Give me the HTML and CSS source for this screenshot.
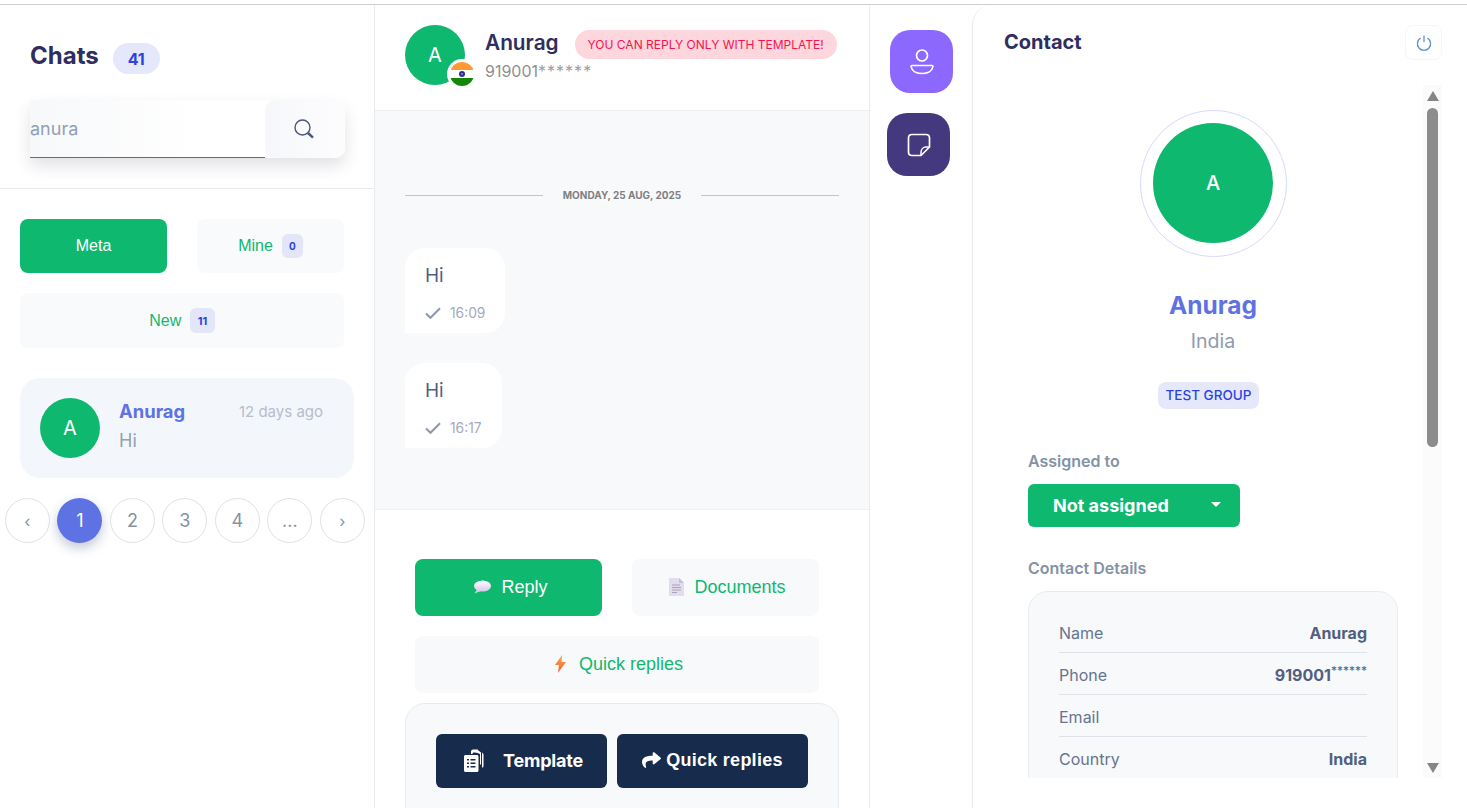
FILE: index.html
```html
<!DOCTYPE html>
<html lang="en">

<head>
    <meta charset="UTF-8">
    <meta name="viewport" content="width=device-width, initial-scale=1.0">
    <title>Chats</title>
    <link rel="stylesheet" href="styles.css">
</head>

<body>
    <div class="app">

        <!-- Chat list -->
        <aside class="sidebar">
            <div class="side-head">
                <div class="title-row">
                    <h2>Chats</h2>
                    <span class="count-pill">41</span>
                </div>
                <div class="search">
                    <input type="text" value="anura">
                    <button type="button" class="search-btn">
                        <svg width="22" height="22" viewBox="0 0 22 22" fill="none" stroke="#4a5578" stroke-width="1.4">
                            <circle cx="9.5" cy="9.5" r="7.5"/>
                            <path d="M15 15l5 4.6" stroke-width="2.4"/>
                        </svg>
                    </button>
                </div>
            </div>

            <div class="filters">
                <button type="button" class="tab active">Meta</button>
                <button type="button" class="tab">Mine <span class="tab-count">0</span></button>
                <button type="button" class="tab wide">New <span class="tab-count">11</span></button>
            </div>

            <div class="chat-card">
                <div class="avatar">A</div>
                <div class="chat-info">
                    <div class="chat-top">
                        <span class="chat-name">Anurag</span>
                        <span class="chat-time">12 days ago</span>
                    </div>
                    <div class="chat-text">Hi</div>
                </div>
            </div>

            <div class="pager">
                <a class="page small">‹</a>
                <a class="page current">1</a>
                <a class="page">2</a>
                <a class="page">3</a>
                <a class="page">4</a>
                <a class="page">...</a>
                <a class="page small">›</a>
            </div>
        </aside>

        <!-- Conversation -->
        <main class="convo">
            <div class="convo-head">
                <div class="avatar head-avatar">
                    A
                    <span class="flag">
                        <svg width="24" height="24" viewBox="0 0 24 24">
                            <clipPath id="flagClip"><circle cx="12" cy="12" r="12"/></clipPath>
                            <g clip-path="url(#flagClip)">
                                <rect width="24" height="8" fill="#ff9933"/>
                                <rect y="8" width="24" height="8" fill="#fff"/>
                                <rect y="16" width="24" height="8" fill="#138808"/>
                                <circle cx="12" cy="12" r="3" fill="#2a2f8f"/>
                                <circle cx="12" cy="12" r="1" fill="#8d90c8"/>
                            </g>
                        </svg>
                    </span>
                </div>
                <div class="head-text">
                    <div class="head-line">
                        <span class="head-name">Anurag</span>
                        <span class="alert-pill">YOU CAN REPLY ONLY WITH TEMPLATE!</span>
                    </div>
                    <div class="head-phone">919001<span class="stars">******</span></div>
                </div>
            </div>

            <div class="messages">
                <div class="date-row"><span>MONDAY, 25 AUG, 2025</span></div>

                <div class="bubble first">
                    <p>Hi</p>
                    <div class="meta">
                        <svg width="16" height="12" viewBox="0 0 16 12" fill="none" stroke="#8f98ad" stroke-width="2.1"><path d="M1 6.5l4.5 4.3L15 1.2"/></svg>
                        16:09
                    </div>
                </div>
                <div class="bubble">
                    <p>Hi</p>
                    <div class="meta">
                        <svg width="16" height="12" viewBox="0 0 16 12" fill="none" stroke="#8f98ad" stroke-width="2.1"><path d="M1 6.5l4.5 4.3L15 1.2"/></svg>
                        16:17
                    </div>
                </div>
            </div>

            <div class="composer">
                <div class="reply-tabs">
                    <button type="button" class="reply-tab active">
                        <svg width="18" height="14" viewBox="0 0 18 14">
                            <defs><linearGradient id="balloon" x1="0" y1="0" x2="0" y2="1"><stop offset="0" stop-color="#fff"/><stop offset="1" stop-color="#d9c9ea"/></linearGradient></defs>
                            <ellipse cx="9.5" cy="6" rx="8.5" ry="5.6" fill="url(#balloon)"/>
                            <path d="M4 9.5L1.5 13.5 8 11z" fill="#d9c9ea"/>
                        </svg>
                        Reply
                    </button>
                    <button type="button" class="reply-tab">
                        <svg width="15" height="18" viewBox="0 0 15 18">
                            <path d="M0 0h10l5 5v13H0z" fill="#e3dbee"/>
                            <path d="M10 0l5 5h-5z" fill="#c9bcd9"/>
                            <path d="M3 7h8M3 9.5h9M3 12h9M3 14.5h5" stroke="#a9a4b5" stroke-width="1"/>
                        </svg>
                        Documents
                    </button>
                    <button type="button" class="reply-tab wide">
                        <svg width="11" height="18" viewBox="0 0 11 18">
                            <defs><linearGradient id="bolt" x1="0" y1="0" x2="0" y2="1"><stop offset="0" stop-color="#fdab3d"/><stop offset="1" stop-color="#ef5b47"/></linearGradient></defs>
                            <path d="M7 0L0 10h4l-1 8 8-11H6.5z" fill="url(#bolt)"/>
                        </svg>
                        Quick replies
                    </button>
                </div>

                <div class="template-box">
                    <button type="button" class="dark-btn template-btn">
                        <svg width="20" height="23" viewBox="0 0 20 23" fill="#fff">
                            <path d="M7 2.5C7 1.2 8 .5 9 .5h5v3h-4c-1 0-1.500.5-1.500 1.500H7z"/>
                            <path d="M11 3V1.500h3.500L17 3.500v12h-1V5z" />
                            <path d="M18 3.500l1.500 1.500V17c0 1-.7 1.500-1.500 1.500z"/>
                            <path fill-rule="evenodd" d="M1.500 6H13c.8 0 1.500.7 1.500 1.500v14c0 .8-.7 1.500-1.500 1.500H1.500C.7 23 0 22.300 0 21.500v-14C0 6.700.7 6 1.500 6zM3 10v1.500h2V10zm3.500 0v1.500h5V10zM3 13.500V15h2v-1.500zm3.500 0V15h5v-1.500zM3 17v1.500h2V17zm3.500 0v1.500h5V17z"/>
                        </svg>
                        <span class="template-label">Template</span>
                    </button>
                    <button type="button" class="dark-btn quick-btn">
                        <svg width="19" height="18" viewBox="0 0 512 512" fill="#fff" preserveAspectRatio="none">
                            <path d="M503.691 189.836L327.687 37.851C312.281 24.546 288 35.347 288 56.015v80.053C127.371 137.907 0 170.1 0 322.326c0 61.441 39.581 122.309 83.333 154.132 13.653 9.931 33.111-2.533 28.077-18.631C66.066 312.814 132.917 274.316 288 272.085V360c0 20.7 24.3 31.453 39.687 18.164l176.004-152c11.071-9.562 11.086-26.753 0-36.328z"/>
                        </svg>
                        Quick replies
                    </button>
                </div>
            </div>
        </main>

        <!-- Icon rail -->
        <nav class="rail">
            <button type="button" class="rail-btn purple">
                <svg width="24" height="30" viewBox="0 0 24 30" fill="none" stroke="#fff" stroke-width="1.7">
                    <circle cx="12" cy="8.500" r="5.500"/>
                    <path d="M2 18.500h20c.6 0 1 .5.9 1.100C22.200 24 17.500 26.500 12 26.500S1.800 24 1.100 19.600c-.1-.6.3-1.100.9-1.100z"/>
                </svg>
            </button>
            <button type="button" class="rail-btn indigo">
                <svg width="24" height="24" viewBox="0 0 24 24" fill="none" stroke="#fff" stroke-width="1.700">
                    <path d="M14 22.500H5c-2 0-3.500-1.500-3.500-3.500V5C1.500 3 3 1.500 5 1.500h14c2 0 3.500 1.500 3.500 3.500v9z"/>
                    <path d="M14 22.500v-3c0-3 2-5.500 5-5.500h3.500" stroke-width="1.500"/>
                </svg>
            </button>
        </nav>

        <!-- Contact panel -->
        <section class="contact">
            <div class="contact-head">
                <h3>Contact</h3>
                <button type="button" class="power-btn">
                    <svg width="16" height="16" viewBox="0 0 16 16" fill="none" stroke="#5b95c6" stroke-width="1.300">
                        <path d="M4.700 3a6.600 6.600 0 1 0 6.600 0"/>
                        <path d="M8 .5v6.500"/>
                    </svg>
                </button>
            </div>

            <div class="contact-scroll">
                <div class="contact-body">
                    <div class="profile">
                        <div class="ring"><div class="avatar big-avatar">A</div></div>
                        <div class="profile-name">Anurag</div>
                        <div class="profile-country">India</div>
                        <span class="group-tag">TEST GROUP</span>
                    </div>

                    <div class="label assigned-label">Assigned to</div>
                    <button type="button" class="assign-btn">Not assigned <i class="caret"></i></button>

                    <div class="label details-label">Contact Details</div>
                    <div class="details">
                        <div class="detail-row"><span>Name</span><b>Anurag</b></div>
                        <div class="detail-row"><span>Phone</span><b>919001<sup>******</sup></b></div>
                        <div class="detail-row"><span>Email</span><b></b></div>
                        <div class="detail-row"><span>Country</span><b>India</b></div>
                    </div>
                </div>

                <div class="scrollbar">
                    <i class="arrow up"></i>
                    <div class="track"><div class="thumb"></div></div>
                    <i class="arrow down"></i>
                </div>
            </div>
        </section>
    </div>
</body>

</html>
```

FILE: styles.css
```css
* {
    box-sizing: border-box;
    font-family: Inter, "Liberation Sans", sans-serif;
}

html,
body {
    margin: 0;
    padding: 0;
    height: 808px;
    overflow: hidden;
    background: #fff;
}

body {
    padding-top: 4px;
}

button {
    border: none;
    cursor: pointer;
    font-family: "Liberation Sans", sans-serif;
}

.app {
    display: flex;
    height: 804px;
    border-top: 1px solid #cfcfcf;
}

.avatar {
    width: 60px;
    height: 60px;
    flex: none;
    border-radius: 50%;
    background: #0eb86f;
    color: #fff;
    font-size: 20px;
    display: flex;
    align-items: center;
    justify-content: center;
    position: relative;
}

/* sidebar */
.sidebar {
    width: 375px;
    flex: none;
    border-right: 1px solid #e9ecef;
}

.side-head {
    padding: 38px 30px 30px;
    border-bottom: 1px solid #e9ecef;
}

.title-row {
    display: flex;
    align-items: center;
    gap: 14px;
    height: 31px;
}

.title-row h2 {
    margin: 0;
    font-size: 24px;
    font-weight: 700;
    color: #2e2e5f;
    position: relative;
    top: -3px;
}

.count-pill {
    width: 47px;
    height: 31px;
    border-radius: 16px;
    background: #e5e8fb;
    color: #2b44e0;
    font-size: 16px;
    font-weight: 700;
    display: flex;
    align-items: center;
    justify-content: center;
}

.search {
    display: flex;
    width: 315px;
    height: 58px;
    margin-top: 26px;
    border-radius: 0 10px 10px 0;
    box-shadow: 0 8px 16px rgba(40, 50, 70, .14);
}

.search input {
    flex: 1;
    min-width: 0;
    border: none;
    border-bottom: 1px solid #6b6b6b;
    background: linear-gradient(90deg, #f7f8fa, #fff 70%);
    padding: 0;
    outline: none;
    font-size: 18px;
    color: #94a0b4;
}

.search-btn {
    width: 80px;
    flex: none;
    padding: 0 2px 0 0;
    border-radius: 10px;
    background: linear-gradient(90deg, #f6f7fa, #fdfdfe);
    display: flex;
    align-items: center;
    justify-content: center;
}

.filters {
    display: grid;
    grid-template-columns: 147px 147px;
    grid-template-rows: 54px 55px;
    column-gap: 30px;
    row-gap: 20px;
    padding: 30px 20px;
}

.tab {
    padding: 0 0 1px;
    border-radius: 8px;
    background: #f9fafc;
    color: #0eb86f;
    font-size: 16px;
    display: flex;
    align-items: center;
    justify-content: center;
    gap: 9px;
}

.tab.active {
    background: #0eb86f;
    color: #fff;
}

.tab.wide {
    grid-column: 1 / 3;
    padding: 0;
}

.tab-count {
    min-width: 21px;
    height: 24px;
    padding: 0 7px;
    border-radius: 6px;
    background: #e3e5f8;
    color: #2b44e0;
    font-size: 10px;
    font-weight: 700;
    display: flex;
    align-items: center;
    justify-content: center;
}

.tab.wide .tab-count {
    height: 25px;
    padding: 0 7.5px;
    font-size: 11px;
}

.chat-card {
    display: flex;
    gap: 19px;
    width: 334px;
    height: 100px;
    margin-left: 20px;
    padding: 20px 31px 20px 20px;
    border-radius: 20px;
    background: #f3f6fb;
}

.chat-info {
    flex: 1;
}

.chat-top {
    display: flex;
    justify-content: space-between;
    align-items: center;
    margin-top: 2px;
}

.chat-name {
    font-size: 18.4px;
    font-weight: 700;
    color: #5f72e4;
}

.chat-time {
    font-size: 15px;
    color: #b6bdcd;
}

.chat-text {
    margin-top: 8px;
    font-size: 18px;
    color: #94a0b4;
}

.pager {
    display: flex;
    gap: 7.5px;
    margin: 20px 0 0 4.9px;
}

.page {
    width: 45px;
    height: 45px;
    border-radius: 50%;
    border: 1px solid #dee2e6;
    color: #8492a6;
    font-size: 18px;
    display: flex;
    align-items: center;
    justify-content: center;
}

.page.small {
    font-size: 16px;
}

.page.current {
    border: none;
    background: #5f72e4;
    color: #fff;
    box-shadow: 0 5px 12px rgba(60, 70, 120, .3);
}

/* conversation */
.convo {
    width: 495px;
    flex: none;
    border-right: 1px solid #e9ecef;
    overflow: hidden;
}

.convo-head {
    height: 106px;
    padding: 20px 0 0 30px;
    display: flex;
    gap: 20px;
    border-bottom: 1px solid #edeff2;
}

.flag {
    position: absolute;
    left: 42px;
    top: 34px;
    width: 30px;
    height: 30px;
    border-radius: 50%;
    background: #fff;
    display: flex;
    align-items: center;
    justify-content: center;
}

.head-line {
    display: flex;
    align-items: flex-start;
    gap: 16px;
    margin-top: 5px;
}

.head-name {
    font-size: 20.8px;
    font-weight: 600;
    color: #2e2e5f;
}

.alert-pill {
    height: 29px;
    padding: 0 13px;
    border-radius: 15px;
    background: #fed6dd;
    color: #f5134f;
    font-size: 12px;
    display: flex;
    align-items: center;
}

.head-phone {
    margin-top: 2px;
    font-size: 16px;
    color: #8f8f8f;
}

.stars {
    letter-spacing: 1px;
    color: #a0a0a0;
}

.messages {
    height: 399px;
    padding: 0 30px;
    background: #f8f9fb;
    border-bottom: 1px solid #edeff2;
    overflow: hidden;
}

.date-row {
    display: flex;
    align-items: center;
    gap: 20px;
    margin-top: 78px;
    color: #808080;
    font-size: 10px;
    font-weight: 700;
    height: 13px;
}

.date-row span {
    line-height: 13px;
    padding-bottom: 1px;
}

.date-row:before,
.date-row:after {
    content: '';
    flex: 1;
    height: 1px;
    background: #c4c4c4;
}

.bubble {
    width: fit-content;
    height: 85px;
    margin-top: 30px;
    padding: 15px 20px 0;
    border-radius: 20px 20px 20px 0;
    background: #fff;
}

.bubble.first {
    margin-top: 46px;
}

.bubble p {
    margin: 0;
    font-size: 19px;
    line-height: 26px;
    color: #525f7f;
}

.meta {
    display: flex;
    align-items: center;
    gap: 9px;
    margin-top: 16px;
    font-size: 13.8px;
    color: #a3a9bf;
}

.composer {
    padding-top: 49px;
}

.reply-tabs {
    display: grid;
    grid-template-columns: 187px 187px;
    grid-template-rows: 57px 57px;
    gap: 20px 30px;
    margin-left: 40px;
}

.reply-tab {
    padding: 0 0 1px 4px;
    border-radius: 8px;
    background: #f8f9fb;
    color: #0eb86f;
    font-size: 18px;
    display: flex;
    align-items: center;
    justify-content: center;
    gap: 10px;
}

.reply-tab.active {
    background: #0eb86f;
    color: #fff;
}

.reply-tab.wide {
    grid-column: 1 / 3;
    gap: 13px;
}

.template-box {
    display: flex;
    gap: 10px;
    width: 434px;
    height: 200px;
    margin: 10px 0 0 30px;
    padding: 30px;
    border: 1px solid #e9ecef;
    border-radius: 20px;
    background: #f8f9fb;
}

.dark-btn {
    height: 54px;
    padding: 0 0 2px;
    border-radius: 6px;
    background: #172b4d;
    color: #fff;
    font-size: 18px;
    font-weight: 700;
    display: flex;
    align-items: center;
    justify-content: center;
}

.template-btn {
    width: 171px;
    gap: 19px;
    padding-left: 4px;
    letter-spacing: -.2px;
}

.quick-btn {
    width: 191px;
    gap: 5px;
    letter-spacing: .25px;
}

/* icon rail */
.rail {
    width: 102px;
    flex: none;
    padding-top: 25px;
}

.rail-btn {
    display: flex;
    width: 63px;
    height: 63px;
    padding: 0;
    border-radius: 20px;
    align-items: center;
    justify-content: center;
}

.rail-btn.purple {
    margin-left: 20px;
    background: #8c68ff;
}

.rail-btn.indigo {
    margin: 20px 0 0 17px;
    background: #44397f;
}

/* contact panel */
.contact {
    flex: 1;
    min-width: 0;
    padding-right: 25px;
    border-left: 1px solid #e9ecef;
    border-top-left-radius: 20px;
}

.contact-head {
    display: flex;
    justify-content: space-between;
    height: 80px;
    padding: 20px 0 0 31px;
}

.contact-head h3 {
    margin: 5px 0 0;
    font-size: 20px;
    font-weight: 700;
    color: #2e2e5f;
}

.power-btn {
    width: 37px;
    height: 35px;
    padding: 0;
    border: 1px solid #f5f6f8;
    border-radius: 8px;
    background: #fff;
    display: flex;
    align-items: center;
    justify-content: center;
}

.contact-scroll {
    display: flex;
    height: 693px;
}

.contact-body {
    flex: 1;
    min-width: 0;
    padding: 25px 25px 0 55px;
    overflow: hidden;
}

.profile {
    display: flex;
    flex-direction: column;
    align-items: center;
}

.ring {
    width: 147px;
    height: 147px;
    padding-bottom: 1px;
    border: 1px solid #d5dbfa;
    border-radius: 50%;
    display: flex;
    align-items: center;
    justify-content: center;
}

.big-avatar {
    width: 120px;
    height: 120px;
    font-size: 20px;
    font-weight: 500;
}

.profile-name {
    margin-top: 33px;
    font-size: 24.5px;
    line-height: 30px;
    font-weight: 700;
    color: #5f72e4;
}

.profile-country {
    margin-top: 9px;
    font-size: 19.5px;
    line-height: 24px;
    color: #8f9bb0;
}

.group-tag {
    margin: 29px 9px 0 0;
    height: 27px;
    padding: 0 7.5px 2px;
    border-radius: 8px;
    background: #e5e8fb;
    color: #2b44e0;
    font-size: 13.5px;
    font-weight: 500;
    display: flex;
    align-items: center;
}

.label {
    font-size: 16px;
    line-height: 20px;
    font-weight: 600;
    color: #8492a6;
}

.assigned-label {
    margin-top: 42px;
}

.assign-btn {
    display: flex;
    align-items: center;
    width: 212px;
    height: 43px;
    margin-top: 13px;
    padding: 0 25px;
    border-radius: 6px;
    background: #0eb86f;
    color: #fff;
    font-family: Inter, "Liberation Sans", sans-serif;
    font-size: 18px;
    font-weight: 700;
}

.caret {
    margin-left: auto;
    margin-right: -6px;
    margin-bottom: 3px;
    border-top: 5px solid #fff;
    border-left: 5px solid transparent;
    border-right: 5px solid transparent;
}

.details-label {
    margin-top: 31px;
}

.details {
    height: 240px;
    margin-top: 13px;
    padding: 19px 30px 0;
    border: 1px solid #e9ecef;
    border-radius: 20px;
    background: #f8f9fb;
}

.detail-row {
    display: flex;
    justify-content: space-between;
    align-items: center;
    height: 42px;
    padding-top: 3px;
    border-bottom: 1px solid #dee2e9;
    font-size: 16px;
    color: #67748e;
}

.detail-row b {
    font-weight: 700;
    color: #525f7f;
}

.detail-row sup {
    font-size: 12px;
    font-weight: 400;
    line-height: 0;
}

.scrollbar {
    width: 19px;
    flex: none;
    display: flex;
    flex-direction: column;
    align-items: center;
    background: #fbfbfb;
    padding: 6px 0;
}

.track {
    flex: 1;
    padding-top: 7px;
}

.thumb {
    width: 11px;
    height: 339px;
    border-radius: 6px;
    background: #8c8c8c;
}

.arrow {
    width: 0;
    height: 0;
    border-left: 6.5px solid transparent;
    border-right: 6.5px solid transparent;
}

.arrow.up {
    border-bottom: 10px solid #858585;
}

.arrow.down {
    margin-bottom: -1px;
    border-top: 10px solid #858585;
}
```
